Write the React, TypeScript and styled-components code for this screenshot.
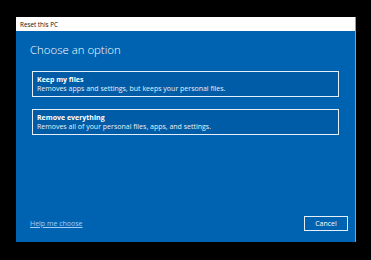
import React from "react";
import styled, { createGlobalStyle } from "styled-components";

const Global = createGlobalStyle`
  html, body { margin: 0; padding: 0; background: #000; }
  body { font-family: "Open Sans", "Noto Sans", sans-serif; }
`;

const Stage = styled.div`
  width: 371px;
  height: 260px;
  box-sizing: border-box;
  padding: 17px 15px 0 16px;
  background: #000;
`;

const Window = styled.div`
  width: 340px;
  height: 225px;
  display: flex;
  flex-direction: column;
  background: #0063b1;
  border-right: 1px solid #4fb0ee;
  box-sizing: border-box;
`;

const TitleBar = styled.div`
  height: 14px;
  flex: none;
  background: #fff;
  display: flex;
  align-items: center;
  padding-left: 4px;
  font-size: 6.3px;
  color: #111;
  box-sizing: border-box;
`;

const Body = styled.div`
  flex: 1;
  display: flex;
  flex-direction: column;
  padding: 10px 16px 11px 16px;
`;

const Heading = styled.h1`
  margin: 0 0 13px -2px;
  font-weight: 300;
  font-size: 11.4px;
  line-height: 17px;
  color: #fff;
`;

const Options = styled.div`
  display: flex;
  flex-direction: column;
  gap: 12px;
`;

const Option = styled.button`
  all: unset;
  box-sizing: border-box;
  width: 307px;
  height: 26px;
  border: 1px solid #e6eef7;
  background: #005ca6;
  padding: 3px 4px;
  display: flex;
  flex-direction: column;
  justify-content: center;
  color: #fff;
  font-family: "Open Sans", "Noto Sans", sans-serif;
`;

const OptionTitle = styled.span`
  font-size: 7px;
  line-height: 9px;
  font-weight: 700;
`;

const OptionText = styled.span`
  font-size: 7px;
  line-height: 9px;
  color: #e8f0f8;
`;

const Footer = styled.div`
  margin-top: auto;
  display: flex;
  align-items: center;
  justify-content: space-between;
`;

const HelpLink = styled.a`
  margin-left: -2px;
  font-size: 7px;
  color: #9fd0ff;
  text-decoration: underline;
`;

const CancelButton = styled.button`
  all: unset;
  box-sizing: border-box;
  width: 44px;
  height: 15px;
  margin-right: -9px;
  border: 1.5px solid #e6eef7;
  display: flex;
  align-items: center;
  justify-content: center;
  font-family: "Open Sans", "Noto Sans", sans-serif;
  font-size: 7px;
  color: #fff;
`;

export default function App() {
  return (
    <>
      <Global />
      <Stage>
        <Window>
          <TitleBar>Reset this PC</TitleBar>
          <Body>
            <Heading>Choose an option</Heading>
            <Options>
              <Option>
                <OptionTitle>Keep my files</OptionTitle>
                <OptionText>Removes apps and settings, but keeps your personal files.</OptionText>
              </Option>
              <Option>
                <OptionTitle>Remove everything</OptionTitle>
                <OptionText>Removes all of your personal files, apps, and settings.</OptionText>
              </Option>
            </Options>
            <Footer>
              <HelpLink href="#">Help me choose</HelpLink>
              <CancelButton>Cancel</CancelButton>
            </Footer>
          </Body>
        </Window>
      </Stage>
    </>
  );
}
